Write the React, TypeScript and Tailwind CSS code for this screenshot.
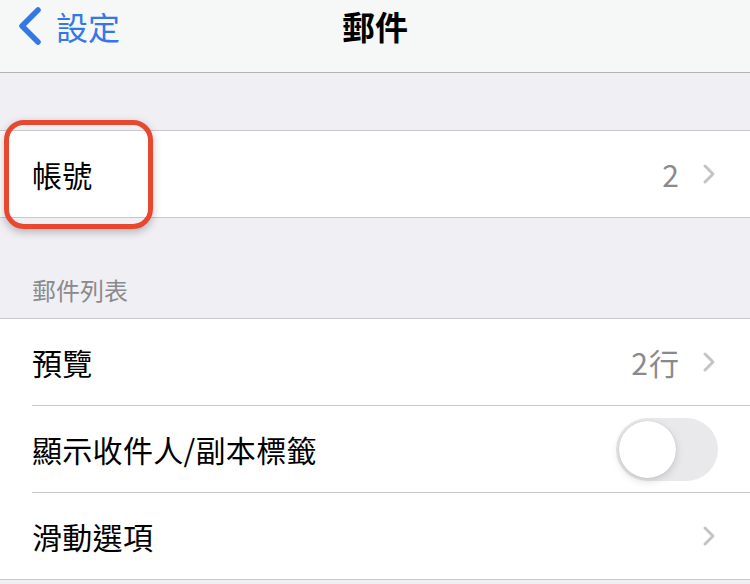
const font = { fontFamily: '"Noto Sans CJK TC", "Noto Sans", sans-serif' };

const Chevron = () => (
  <svg width="14" height="22" viewBox="0 0 14 22" className="ml-[22px]">
    <path d="M3 3l8 8-8 8" fill="none" stroke="#c4c4c7" strokeWidth="3" strokeLinecap="round" strokeLinejoin="round" />
  </svg>
);

const Toggle = () => (
  <div className="w-[102px] h-[63px] rounded-full bg-[#e9e9eb] p-[3px] flex items-center">
    <div className="w-[57px] h-[57px] rounded-full bg-white shadow-[0_3px_8px_rgba(0,0,0,0.15),0_0_1px_rgba(0,0,0,0.2)]" />
  </div>
);

interface RowProps {
  label: string;
  value?: string;
  chevron?: boolean;
  toggle?: boolean;
  last?: boolean;
}

const Row = ({ label, value, chevron, toggle, last }: RowProps) => (
  <div className="pl-[32px] bg-white">
    <div className={`h-[86px] flex items-center pr-[34px] ${last ? "" : "border-b border-[#c8c8cc] box-content"}`}>
      <span className="text-[30px] text-black flex-1 tracking-[0.3px]">{label}</span>
      {value && <span className="text-[30px] text-[#8a8a8e] tracking-[1px]">{value}</span>}
      {chevron && <Chevron />}
      {toggle && <div className="-mr-[2px]"><Toggle /></div>}
    </div>
  </div>
);

export default function App() {
  return (
    <div className="w-[750px] h-[584px] bg-[#efeff4] overflow-hidden" style={font}>
      <div className="h-[73px] bg-[#f6f7f7] border-b border-[#b4b4b8] relative flex items-start pt-[3px]">
        <div className="flex items-center pl-[18px] text-[#3478e8]">
          <svg width="24" height="40" viewBox="0 0 24 40">
            <path d="M20 4L4 20l16 16" fill="none" stroke="#3478e8" strokeWidth="5.5" strokeLinecap="round" strokeLinejoin="round" />
          </svg>
          <span className="text-[32px] ml-[14px] leading-[46px]">設定</span>
        </div>
        <div className="absolute left-0 right-0 top-[3px] text-center text-[33px] font-bold text-black leading-[46px]">郵件</div>
      </div>

      <div className="h-[57px]" />

      <div className="border-y border-[#c8c8cc] relative">
        <Row label="帳號" value="2" chevron last />
        <div className="absolute left-[4px] -top-[11px] w-[149px] h-[109px] rounded-[20px] border-[5px] border-[#e8482f] shadow-[0_3px_8px_rgba(0,0,0,0.25)]" />
      </div>

      <div className="h-[100px] flex items-end pl-[32px] pb-[12px]">
        <span className="text-[24px] text-[#8a8a8e] leading-[32px]">郵件列表</span>
      </div>

      <div className="border-y border-[#c8c8cc]">
        <Row label="預覽" value="2行" chevron />
        <Row label="顯示收件人/副本標籤" toggle />
        <Row label="滑動選項" chevron last />
      </div>
    </div>
  );
}
